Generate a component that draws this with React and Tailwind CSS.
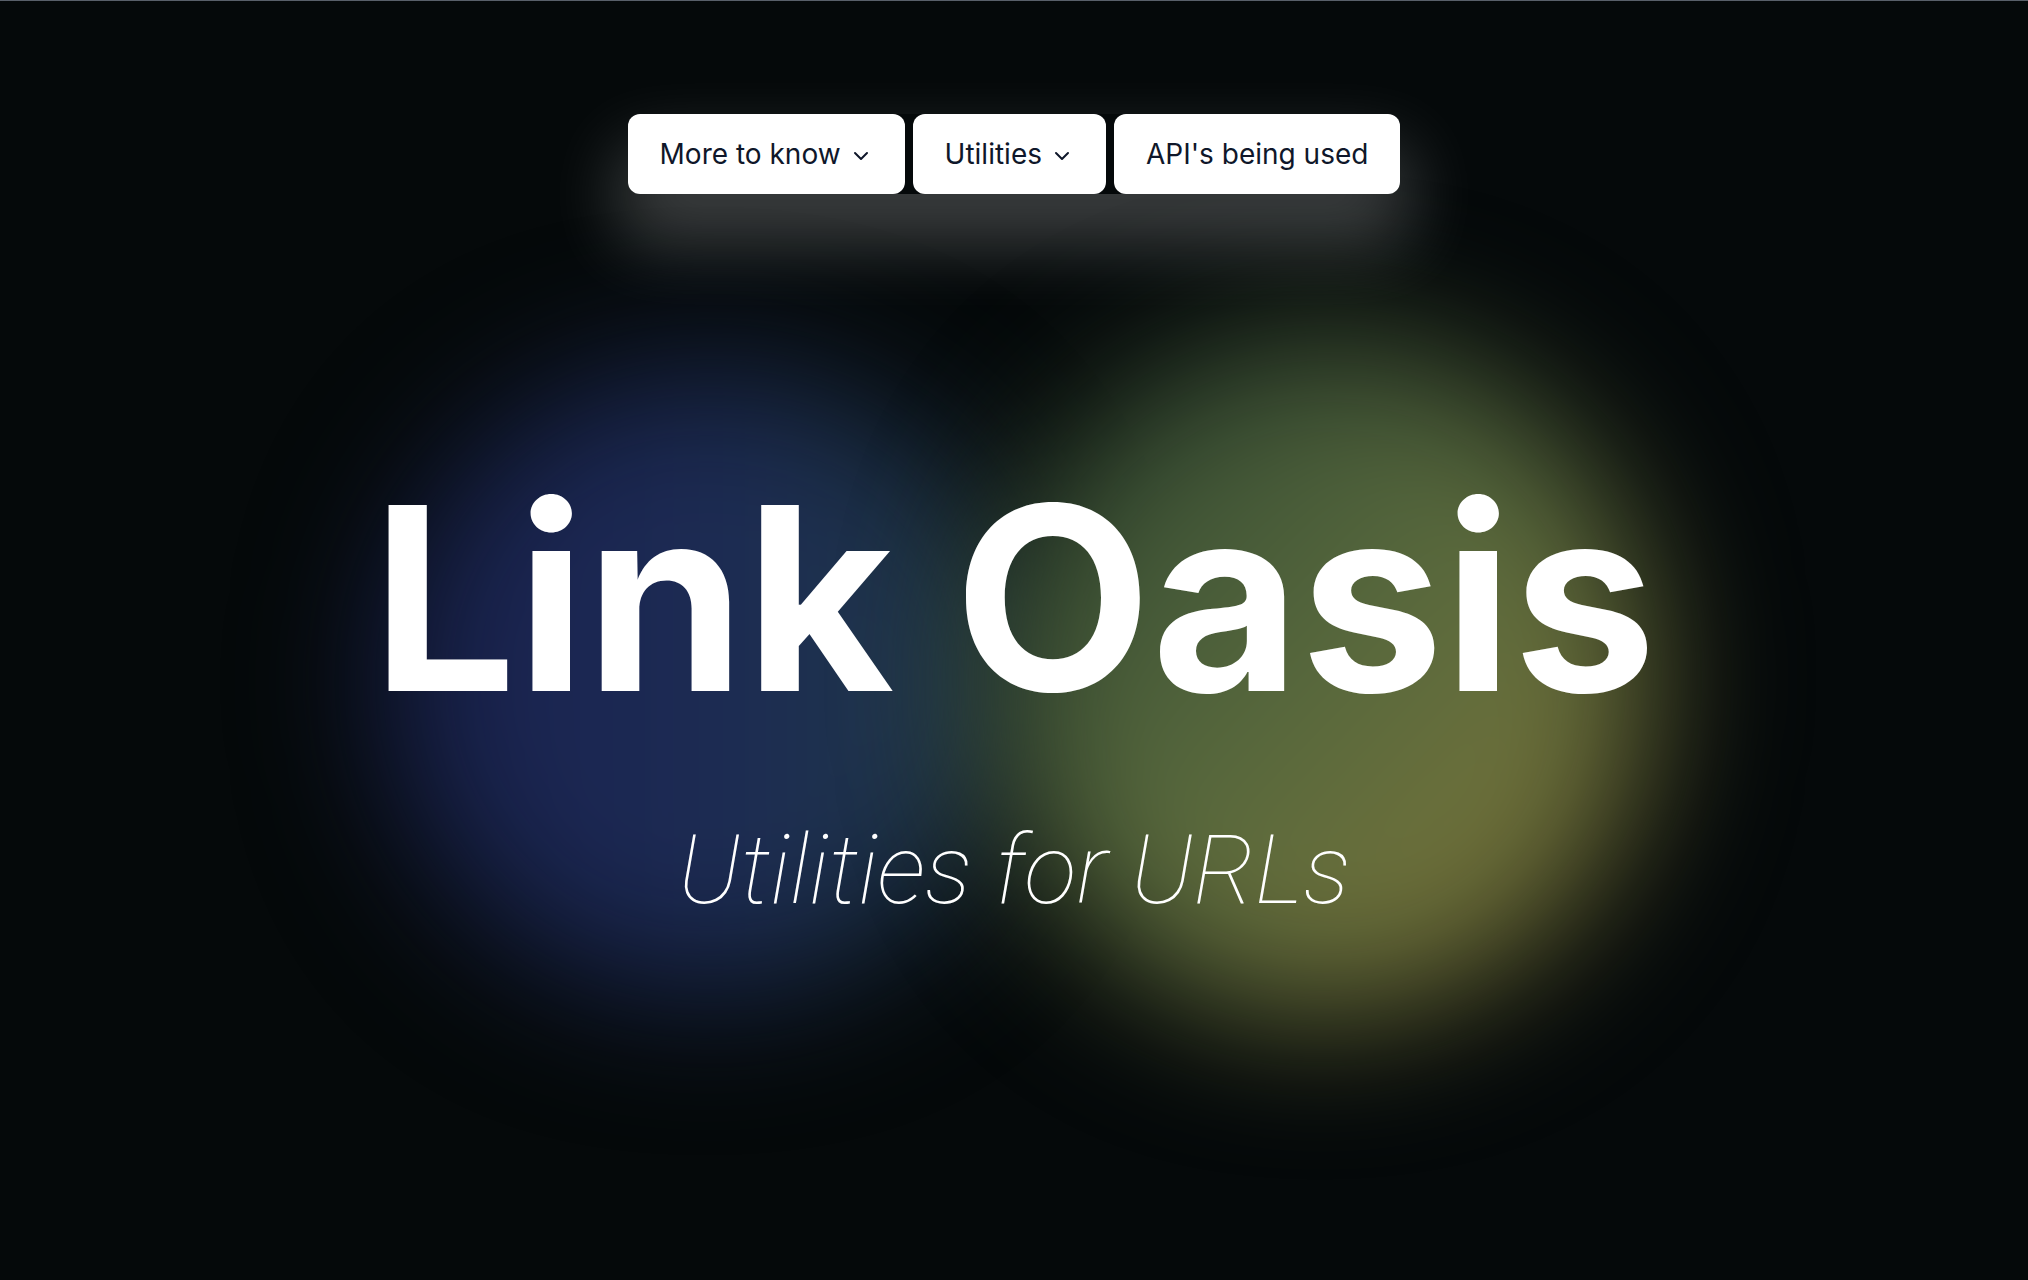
import React from 'react';
import { ChevronDown } from 'lucide-react';

const NavButton = ({ label, menu }) => (
  <button className="flex h-[80px] items-center rounded-[12px] bg-white px-[32px] text-[28px] font-normal text-[#0f172a]">
    <span>{label}</span>
    {menu && <ChevronDown className="relative top-[2px] ml-[8px] h-[24px] w-[24px]" strokeWidth={2} />}
  </button>
);

const App = () => {
  return (
    <div
      className="relative min-h-[1280px] w-full overflow-hidden border-t border-[#59606a] bg-[#05090a]"
      style={{ fontFamily: 'Inter, "Noto Sans", sans-serif' }}
    >
      {/* background blobs */}
      <div className="pointer-events-none absolute left-[385px] top-[370px] h-[620px] w-[640px] rounded-full bg-gradient-to-r from-[#19214e] via-[#1c2a54] to-[#213a44] blur-[70px]" />
      <div className="pointer-events-none absolute left-[990px] top-[335px] h-[680px] w-[660px] rounded-full bg-gradient-to-br from-[#263f2e] via-[#58693d] to-[#857836] blur-[70px]" />

      <div className="relative flex flex-col items-center">
        {/* nav */}
        <nav className="mt-[113px] flex gap-[8px] rounded-[12px] shadow-[0_40px_70px_10px_rgba(255,255,255,0.22)]">
          <NavButton label="More to know" menu />
          <NavButton label="Utilities" menu />
          <NavButton label="API's being used" />
        </nav>

        <h1 className="mt-[276px] text-[256px] font-bold leading-none text-white">
          Link Oasis
        </h1>
        <p
          className="mt-[96px] text-[97px] font-thin italic leading-none text-white"
          style={{ fontFamily: 'Roboto, sans-serif' }}
        >
          Utilities for URLs
        </p>
      </div>
    </div>
  );
};

export default App;
